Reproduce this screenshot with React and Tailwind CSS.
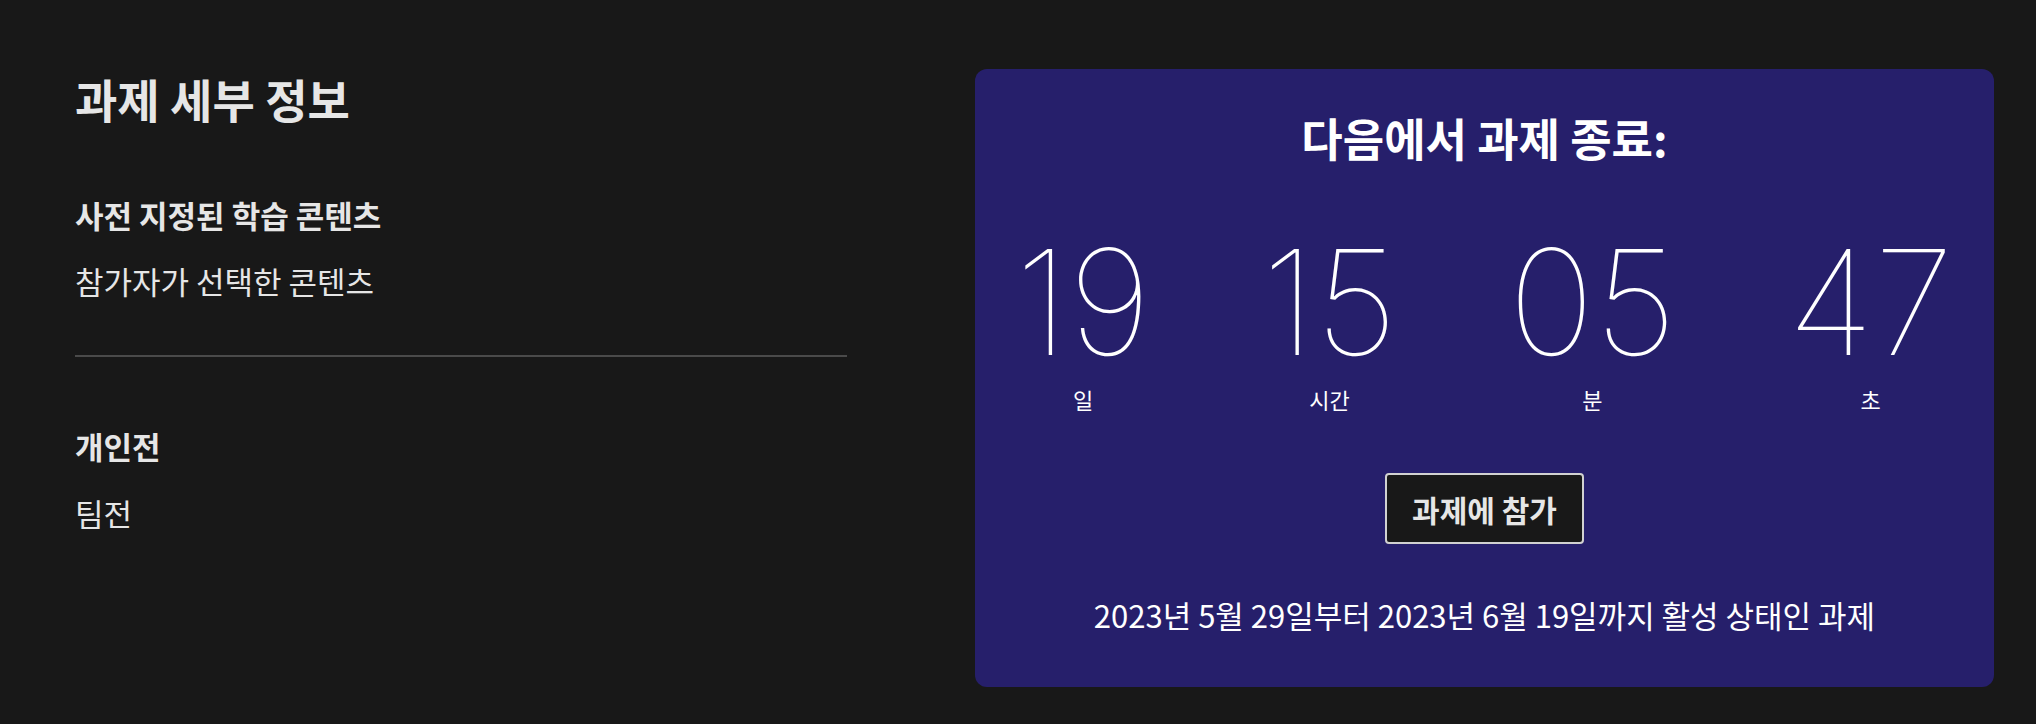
import React from 'react';

const countdown = [
  { value: '19', label: '일' },
  { value: '15', label: '시간' },
  { value: '05', label: '분' },
  { value: '47', label: '초' },
];

export default function App() {
  return (
    <div className="min-h-screen bg-[#181818] font-['Noto_Sans_CJK_KR',sans-serif] text-[#e6e6e6]">
      <div className="flex pl-[75px] pr-[42px] pt-[69px]">
        {/* Challenge details */}
        <section className="w-[772px] shrink-0">
          <h1 className="mt-[6px] text-[46px] font-semibold leading-none">과제 세부 정보</h1>

          <h2 className="mt-[78px] text-[31px] font-semibold leading-none">사전 지정된 학습 콘텐츠</h2>
          <p className="mt-[35px] text-[31px] leading-none">참가자가 선택한 콘텐츠</p>

          <hr className="mt-[59px] border-0 h-[2px] bg-[#4a4a4a]" />

          <h2 className="mt-[73px] text-[31px] font-semibold leading-none">개인전</h2>
          <p className="mt-[36px] text-[31px] leading-none">팀전</p>
        </section>

        {/* Countdown card */}
        <section className="ml-[128px] flex-1 rounded-[12px] bg-[#261f6b] px-[40px] pt-[46px] pb-[57px] text-white">
          <h2 className="text-center text-[45px] font-semibold leading-none">다음에서 과제 종료:</h2>

          <div className="mt-[84px] flex justify-between">
            {countdown.map((item) => (
              <div key={item.label} className="flex flex-col items-center">
                <span className="font-['Inter',sans-serif] text-[146px] font-thin leading-[117px]">
                  {item.value}
                </span>
                <span className="mt-[27px] text-[22px] leading-none">{item.label}</span>
              </div>
            ))}
          </div>

          <div className="mt-[63px] flex justify-center">
            <button className="flex h-[71px] items-center rounded-[4px] border-2 border-[#d1d1d1] bg-[#181818] px-[25px] text-[30px] font-semibold leading-none text-[#e6e6e6]">
              과제에 참가
            </button>
          </div>

          <p className="mt-[55px] text-center text-[31px] leading-none">
            2023년 5월 29일부터 2023년 6월 19일까지 활성 상태인 과제
          </p>
        </section>
      </div>
    </div>
  );
}
